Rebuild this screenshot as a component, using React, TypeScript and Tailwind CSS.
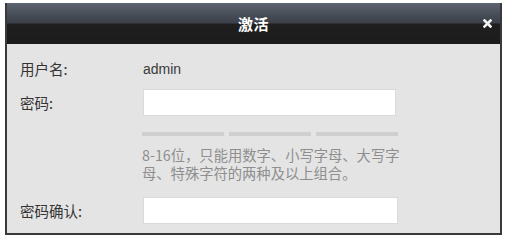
import React from "react";

export default function App() {
  const cjk = { fontFamily: '"Noto Sans CJK SC", "Noto Sans", sans-serif' };
  return (
    <div className="w-[505px] h-[237px] bg-white overflow-hidden">
      <div className="ml-[5px] mt-[3px] w-[497px] h-[232px] border-[2px] border-t-0 border-[#3a3a3a] flex flex-col" style={cjk}>
        <div className="h-[41px] shrink-0 grid grid-cols-[1fr_auto_1fr] items-center bg-[linear-gradient(to_bottom,#5e6572_0%,#4a505a_25%,#3b4049_48%,#1f1f1f_52%,#1b1b1b_100%)]">
          <div />
          <div className="text-white font-bold text-[15px] leading-none tracking-[0.5px]">激活</div>
          <div className="justify-self-end mr-[8px] flex items-center">
            <svg width="9" height="9" viewBox="0 0 9 9">
              <path d="M1.5 1.5 L7.5 7.5 M7.5 1.5 L1.5 7.5" stroke="#f2f2f2" strokeWidth="2.6" strokeLinecap="square" />
            </svg>
          </div>
        </div>
        <div className="flex-1 bg-[#e4e4e4] pt-[15px] text-[14.5px] text-[#333333]">
          <div className="flex items-center h-[20px]">
            <div className="w-[136px] pl-[13px]">用户名:</div>
            <div style={{ fontFamily: '"Liberation Sans", Arial, sans-serif' }} className="text-[14px] text-[#3a3a3a]">admin</div>
          </div>
          <div className="flex items-center h-[27px] mt-[10px]">
            <div className="w-[136px] pl-[13px]">密码:</div>
            <div className="w-[253px] h-[27px] bg-white border border-[#dadada]" />
          </div>
          <div className="flex gap-[5px] ml-[135px] mt-[16px]">
            <div className="w-[82px] h-[4px] bg-[#cfcfcf]" />
            <div className="w-[82px] h-[4px] bg-[#cfcfcf]" />
            <div className="w-[82px] h-[4px] bg-[#cfcfcf]" />
          </div>
          <div className="ml-[135px] mt-[10px] text-[14.3px] leading-[18px] text-[#8e8e8e] whitespace-nowrap">
            <div>8-16位，只能用数字、小写字母、大写字</div>
            <div>母、特殊字符的两种及以上组合。</div>
          </div>
          <div className="flex items-center h-[27px] mt-[15px]">
            <div className="w-[136px] pl-[13px]">密码确认:</div>
            <div className="w-[255px] h-[27px] bg-white border border-[#dadada]" />
          </div>
        </div>
      </div>
    </div>
  );
}
